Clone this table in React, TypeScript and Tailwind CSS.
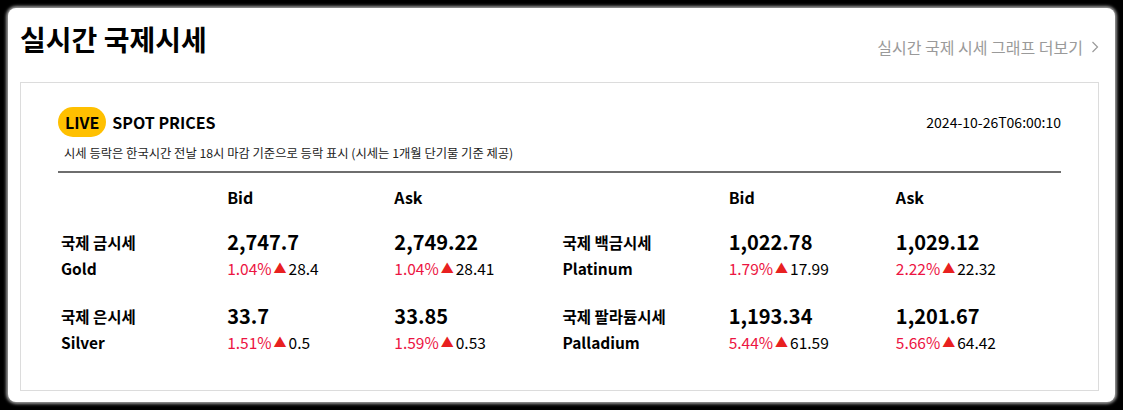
import React from 'react';

type Quote = { value: string; pct: string; diff: string };
type Metal = { ko: string; en: string; bid: Quote; ask: Quote };

const left: Metal[] = [
  {
    ko: '국제 금시세',
    en: 'Gold',
    bid: { value: '2,747.7', pct: '1.04%', diff: '28.4' },
    ask: { value: '2,749.22', pct: '1.04%', diff: '28.41' },
  },
  {
    ko: '국제 은시세',
    en: 'Silver',
    bid: { value: '33.7', pct: '1.51%', diff: '0.5' },
    ask: { value: '33.85', pct: '1.59%', diff: '0.53' },
  },
];

const right: Metal[] = [
  {
    ko: '국제 백금시세',
    en: 'Platinum',
    bid: { value: '1,022.78', pct: '1.79%', diff: '17.99' },
    ask: { value: '1,029.12', pct: '2.22%', diff: '22.32' },
  },
  {
    ko: '국제 팔라듐시세',
    en: 'Palladium',
    bid: { value: '1,193.34', pct: '5.44%', diff: '61.59' },
    ask: { value: '1,201.67', pct: '5.66%', diff: '64.42' },
  },
];

function Price({ q }: { q: Quote }) {
  return (
    <div className="pl-[2px]">
      <div className="text-[20px] font-bold leading-[26px] text-black">{q.value}</div>
      <div className="mt-[2px] flex items-center text-[15.5px] leading-[22px]">
        <span className="text-[#ec1442]">{q.pct}</span>
        <span className="ml-[2px] mr-[2px] text-[13px] text-[#e82020]">▲</span>
        <span className="text-black">{q.diff}</span>
      </div>
    </div>
  );
}

function Group({ rows }: { rows: Metal[] }) {
  return (
    <div>
      <div className="grid grid-cols-3 text-[16px] font-bold leading-[24px] text-black">
        <div />
        <div className="pl-[2px]">Bid</div>
        <div className="pl-[2px]">Ask</div>
      </div>
      <div className="mt-[20px] flex flex-col gap-[24px]">
        {rows.map((m) => (
          <div key={m.en} className="grid grid-cols-3">
            <div className="pl-[3px] font-bold text-black">
              <div className="text-[15.5px] leading-[26px]">{m.ko}</div>
              <div className="mt-[2px] text-[15.5px] leading-[22px]">{m.en}</div>
            </div>
            <Price q={m.bid} />
            <Price q={m.ask} />
          </div>
        ))}
      </div>
    </div>
  );
}

export default function App() {
  return (
    <div
      className="w-[1123px] h-[410px] bg-black p-[8px]"
      style={{ fontFamily: '"Noto Sans CJK KR", "Noto Sans", sans-serif' }}
    >
      <div className="h-full rounded-[8px] bg-white pl-[12px] pr-[16px] pt-[11px] shadow-[0_0_3px_2px_#9a9a9a]">
        <div className="flex items-start justify-between">
          <h1 className="text-[28px] font-bold leading-[40px] text-black">실시간 국제시세</h1>
          <a className="mt-[16px] flex items-center gap-[8px] text-[16px] leading-[24px] text-[#9a9a9a]">
            실시간 국제 시세 그래프 더보기
            <svg width="8" height="12" viewBox="0 0 8 12" fill="none">
              <path d="M1.5 1l5 5-5 5" stroke="#9a9a9a" strokeWidth="1.2" />
            </svg>
          </a>
        </div>

        <div className="mt-[23px] h-[309px] border border-[#dcdcdc] px-[37px] pt-[24px]">
          <div className="flex items-center justify-between">
            <div className="flex items-center gap-[6px]">
              <span className="flex h-[30px] items-center rounded-full bg-[#ffc000] px-[7px] text-[16px] font-bold text-black">
                LIVE
              </span>
              <span className="text-[16px] font-bold text-black">SPOT PRICES</span>
            </div>
            <span className="text-[14px] text-black">2024-10-26T06:00:10</span>
          </div>
          <p className="mt-[3px] pl-[6px] text-[12.3px] leading-[26px] text-[#222]">
            시세 등락은 한국시간 전날 18시 마감 기준으로 등락 표시 (시세는 1개월 단기물 기준 제공)
          </p>
          <div className="mt-[5px] h-[2px] bg-[#6e6e6e]" />
          <div className="mt-[12px] grid grid-cols-2">
            <Group rows={left} />
            <Group rows={right} />
          </div>
        </div>
      </div>
    </div>
  );
}
